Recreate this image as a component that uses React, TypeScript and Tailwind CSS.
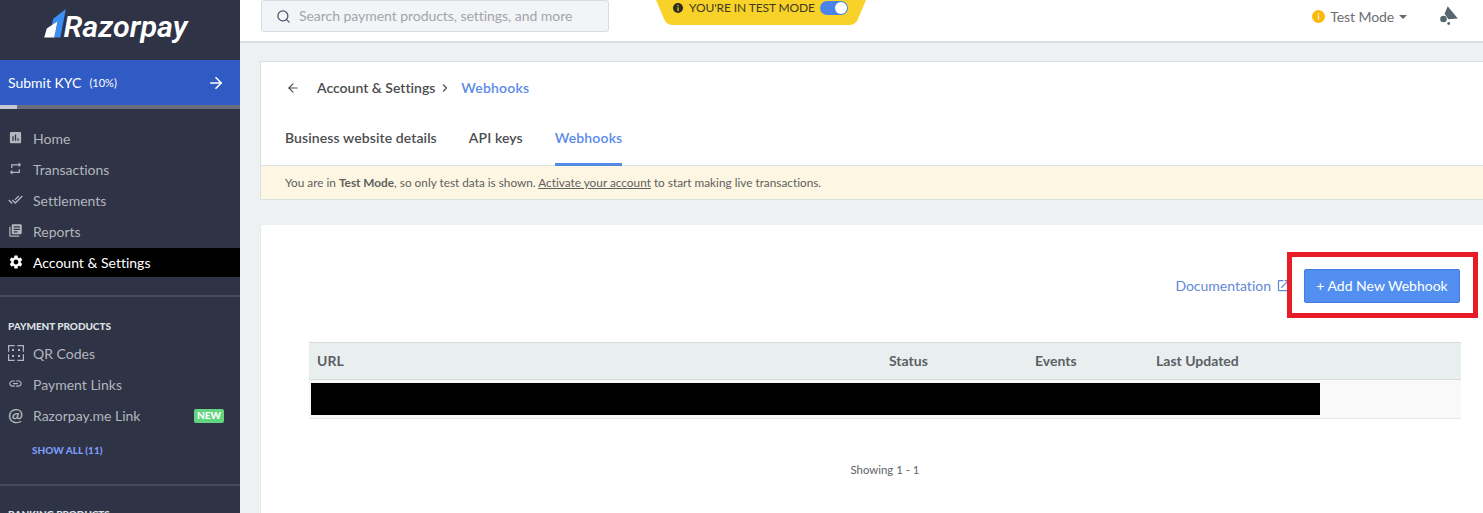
import type { ReactNode } from 'react';
import {
  MdInsertChart,
  MdRepeat,
  MdDoneAll,
  MdLibraryBooks,
  MdSettings,
  MdLink,
  MdOpenInNew,
} from 'react-icons/md';
import { ArrowLeft, ArrowRight, ChevronRight, Search } from 'lucide-react';

function QrIcon() {
  return (
    <svg width="16" height="16" viewBox="0 0 16 16" fill="none" stroke="currentColor" strokeWidth="1.2">
      <path d="M.6 6.700V.6h6.100M9.300 .6h6.100v6.100M15.400 9.300v6.100H9.300M6.700 15.400H.6V9.300" />
      <g fill="currentColor" stroke="none">
        <rect x="4" y="4" width="2" height="2" />
        <rect x="10" y="4" width="2" height="2" />
        <rect x="4" y="10" width="2" height="2" />
        <rect x="10" y="10" width="2" height="2" />
      </g>
    </svg>
  );
}

function NavItem({ icon, label, active, badge }: { icon: ReactNode; label: string; active?: boolean; badge?: string }) {
  return (
    <div
      className={`flex h-[29px] items-center pr-4 pl-2 text-[14px] ${
        active ? 'bg-black text-white' : 'text-[#b3b6be]'
      }`}
    >
      <span className="flex w-[25px] shrink-0 -translate-y-px items-center">{icon}</span>
      <span className="leading-[20px]">{label}</span>
      {badge && (
        <span className="ml-auto flex h-[14px] w-[30px] items-center justify-center rounded-[2px] bg-[#62d67f] text-[10px] font-black text-white">
          {badge}
        </span>
      )}
    </div>
  );
}

function Logo() {
  return (
    <svg width="240" height="60" viewBox="0 0 240 60" className="block shrink-0">
      <path d="M65.800 9 60.400 37.400H54.200L57.800 21 51.600 25.400 53.200 18.800z" fill="#3b8ff3" />
      <path d="M57.600 21.200 54.200 37.400H44.200L46.800 28.600z" fill="#fff" />
      <text
        x="63.500"
        y="37"
        fill="#fff"
        fontFamily="Roboto, sans-serif"
        fontSize="28.5"
        fontWeight="600"
        fontStyle="italic"
        textLength="124"
        lengthAdjust="spacingAndGlyphs"
      >
        Razorpay
      </text>
    </svg>
  );
}

function Sidebar() {
  return (
    <aside className="flex h-full w-[240px] shrink-0 flex-col overflow-hidden bg-[#2e3345]">
      <Logo />
      <div className="flex h-[45px] shrink-0 items-center bg-[#305bc4] pr-[15px] pl-2 text-white">
        <span className="text-[14px]">Submit KYC</span>
        <span className="mt-px ml-2 text-[11px]">(10%)</span>
        <ArrowRight className="ml-auto" size={18} strokeWidth={2.2} />
      </div>
      <div className="h-[4px] shrink-0 bg-[#6a6e7f]">
        <div className="h-full w-[17px] bg-[#c5c8d2]" />
      </div>
      <nav className="flex shrink-0 flex-col gap-[2px] pt-[15px]">
        <NavItem icon={<MdInsertChart size={15} />} label="Home" />
        <NavItem icon={<MdRepeat size={15} />} label="Transactions" />
        <NavItem icon={<MdDoneAll size={15} />} label="Settlements" />
        <NavItem icon={<MdLibraryBooks size={15} />} label="Reports" />
        <NavItem icon={<MdSettings size={16} />} label="Account & Settings" active />
      </nav>
      <div className="mt-[18px] h-[2px] shrink-0 bg-[#454a5d]" />
      <h2 className="mt-[21px] mb-[5px] h-[16px] shrink-0 pl-2 text-[10px] leading-[16px] font-black tracking-[-0.05px] text-[#dfe1e6]">
        PAYMENT PRODUCTS
      </h2>
      <nav className="flex shrink-0 flex-col gap-[2px]">
        <NavItem icon={<QrIcon />} label="QR Codes" />
        <NavItem icon={<MdLink size={15} />} label="Payment Links" />
        <NavItem
          icon={<span className="pb-[2px] text-[18px] leading-[16px] font-semibold">@</span>}
          label="Razorpay.me Link"
          badge="NEW"
        />
      </nav>
      <a className="mt-[12px] h-[16px] shrink-0 pl-8 text-[10px] leading-[16px] font-black text-[#7c9cf5]">SHOW ALL (11)</a>
      <div className="mt-[26px] h-[2px] shrink-0 bg-[#454a5d]" />
      <h2 className="mt-[20px] h-[16px] shrink-0 pl-2 text-[10px] leading-[16px] font-black tracking-[-0.05px] text-[#dfe1e6]">
        BANKING PRODUCTS
      </h2>
    </aside>
  );
}

function TestModeBanner() {
  return (
    <div className="relative h-[25px] w-[210px]">
      <svg className="absolute inset-0" width="210" height="25" viewBox="0 0 210 25">
        <path d="M0 0h210l-8 19q-2.500 6-9 6H17q-6.500 0-9-6z" fill="#f9d229" />
      </svg>
      <div className="relative flex h-[16px] items-center pl-[17px] text-[12px] text-[#3f3b22]">
        <svg width="10" height="10" viewBox="0 0 10 10" className="shrink-0">
          <circle cx="5" cy="5" r="5" fill="#2e2d25" />
          <path d="M5 2v1.300M5 4.200v3.800" stroke="#f9d229" strokeWidth="1.200" />
        </svg>
        <span className="ml-[6px] w-[131px] tracking-[-0.1px] whitespace-nowrap">YOU'RE IN TEST MODE</span>
        <span className="flex h-[14px] w-[28px] shrink-0 items-center justify-end rounded-full bg-[#4a84e8] p-px">
          <span className="size-[12px] rounded-full bg-white" />
        </span>
      </div>
    </div>
  );
}

function Header() {
  return (
    <header className="flex h-[43px] shrink-0 items-start border-b-2 border-[#d8dee1] bg-white pl-[21px]">
      <div className="flex h-[32px] w-[348px] items-center rounded-[3px] border border-[#d8dce4] bg-[#f2f4f7] pl-[14px]">
        <Search size={15} strokeWidth={2} className="text-[#46526a]" />
        <span className="ml-[8px] pb-[2px] text-[14px] tracking-[-0.045px] text-[#a3a5aa]">
          Search payment products, settings, and more
        </span>
      </div>
      <div className="ml-[47px]">
        <TestModeBanner />
      </div>
      <div className="mr-[24px] ml-auto flex h-[33px] items-center">
        <svg width="13" height="13" viewBox="0 0 13 13">
          <circle cx="6.500" cy="6.500" r="6.500" fill="#fcb90d" />
          <path d="M6.500 3v1.500M6.500 5.600v4.200" stroke="#fff3cf" strokeWidth="1.300" />
        </svg>
        <span className="ml-[5px] text-[14px] tracking-[-0.1px] text-[#6b6e72]">Test Mode</span>
        <svg width="8" height="4" viewBox="0 0 8 4" className="ml-[5px]">
          <path d="M0 0h8L4 4z" fill="#65696d" />
        </svg>
        <svg width="20" height="20" viewBox="0 0 20 20" className="ml-[32px] overflow-visible" fill="#57666e">
          <path d="M8.700-.8 18.800 11.500 9.400 12.200 5.600 6.800z" />
          <circle cx="4.500" cy="12" r="3.300" />
          <circle cx="9.700" cy="16.500" r="1.400" />
        </svg>
      </div>
    </header>
  );
}

function SettingsPanel() {
  return (
    <section className="flex h-[139px] shrink-0 flex-col border border-r-0 border-[#dae1e4] bg-white">
      <div className="flex h-[52px] items-center pl-[25px] text-[14px] font-semibold text-[#4a4d50]">
        <ArrowLeft size={14} strokeWidth={1.9} />
        <span className="ml-[17px] pb-[2px]">Account &amp; Settings</span>
        <ChevronRight size={12} strokeWidth={2.4} className="ml-[4px]" />
        <span className="ml-[10px] pb-[2px] tracking-[0.2px] text-[#5a8be8]">Webhooks</span>
      </div>
      <div className="flex h-[52px] border-b border-[#dae1e4] pl-[24px] text-[14px] font-semibold tracking-[0.1px] text-[#4a4d50]">
        <span className="h-[52px] pt-[13px]">Business website details</span>
        <span className="ml-[32px] h-[52px] pt-[13px]">API keys</span>
        <span className="ml-[32px] h-[52px] border-b-[3px] border-[#528ae4] pt-[13px] tracking-[0.15px] text-[#5a8be8]">
          Webhooks
        </span>
      </div>
      <p className="flex h-[33px] items-center bg-[#fdf6e2] pl-[24px] text-[11.8px] text-[#5f615d]">
        <span>
          You are in <b>Test Mode</b>, so only test data is shown. <u>Activate your account</u> to start making live
          transactions.
        </span>
      </p>
    </section>
  );
}

function WebhooksPanel() {
  return (
    <section className="flex h-[289px] flex-col border-l border-[#e3e8ea] bg-white pr-[22px] pl-[48px]">
      <div className="flex h-[117px] items-start justify-end pt-[27px]">
        <a className="-mr-[4px] flex h-[66px] items-center text-[14px] text-[#6289d8]">
          Documentation
          <MdOpenInNew size={15} className="ml-[5px]" />
        </a>
        <div className="relative -mr-[17px] flex h-[66px] w-[191px] items-center border-[5px] border-[#e81c26] bg-white pl-[12px]">
          <button className="mt-[2px] h-[34px] w-[156px] rounded-[2px] border border-[#427cdd] bg-[#528ff0] pb-[2px] text-[14px] text-white">
            + Add New Webhook
          </button>
        </div>
      </div>
      <div className="grid h-[38px] shrink-0 grid-cols-[572px_146px_121px_1fr] items-center border-y border-[#d6dcdd] bg-[#e9efef] pb-[2px] pl-2 text-[14px] font-bold text-[#5b6066]">
        <span>URL</span>
        <span>Status</span>
        <span>Events</span>
        <span>Last Updated</span>
      </div>
      <div className="h-[39px] shrink-0 border-b border-[#e8eaea] bg-[#f9f9f9] pt-[3px] pl-[2px]">
        <div className="h-[32px] w-[1009px] bg-black" />
      </div>
      <p className="mt-[43px] text-center text-[11.4px] leading-[16px] text-[#606468]">Showing 1 - 1</p>
    </section>
  );
}

export default function App() {
  return (
    <div className="flex h-[513px] w-[1483px] overflow-hidden bg-[#edf1f2] font-['Lato',sans-serif] [font-variant-ligatures:none]">
      <Sidebar />
      <div className="flex min-w-0 flex-1 flex-col">
        <Header />
        <main className="flex flex-col gap-[25px] pt-[18px] pl-[20px]">
          <SettingsPanel />
          <WebhooksPanel />
        </main>
      </div>
    </div>
  );
}
